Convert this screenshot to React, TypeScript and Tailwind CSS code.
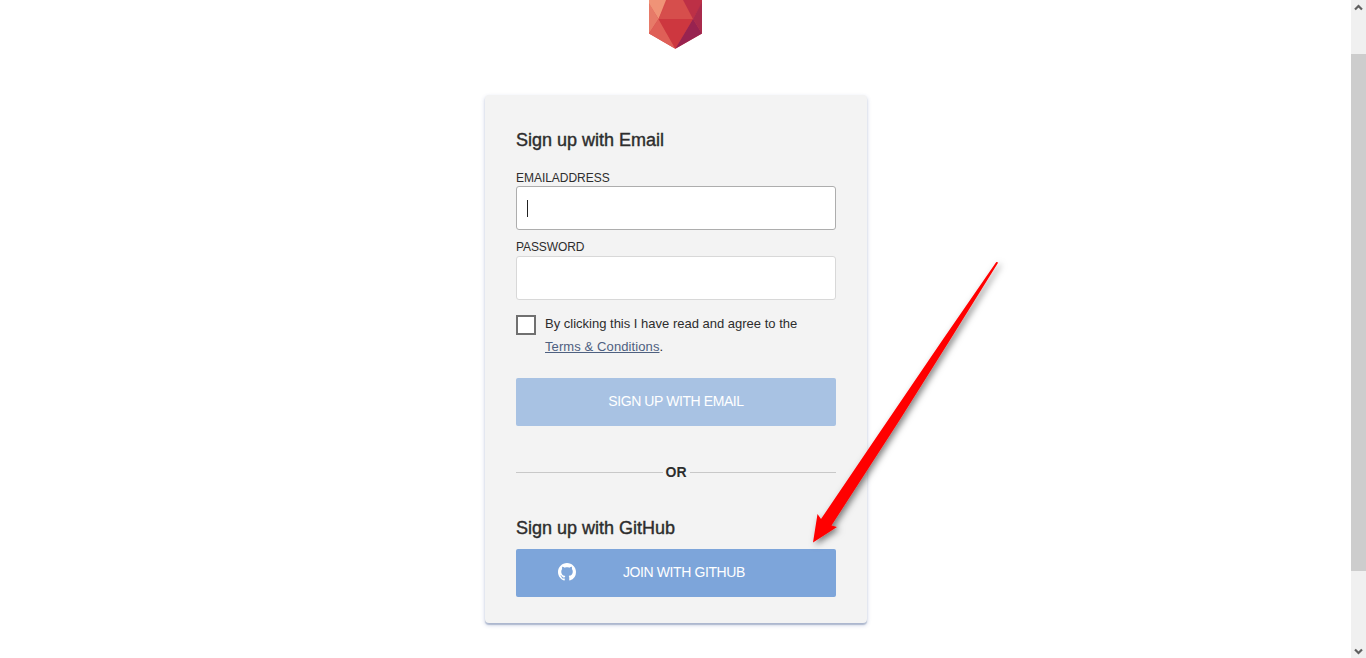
import React from "react";

function Logo() {
  return (
    <svg className="block h-[49px] w-[54px] shrink-0" viewBox="1 0 54 49">
      <path d="M1-10 27-14 54-10V33.5L27.3 48.7 1 33.5Z" fill="#d64b4a" />
      <path d="M1-10H22L10.5 19 1 4Z" fill="#f09377" />
      <path d="M1 3 10.5 19 1 33.5Z" fill="#e77a68" />
      <path d="M10.5 19 27.3 48.7 1 33.5Z" fill="#df5f57" />
      <path d="M21-2 10.5 19H45L34-2Z" fill="#d64e4c" />
      <path d="M10.5 19H45L27.3 48.7Z" fill="#cd373f" />
      <path d="M33.5-3H54V3L45 19Z" fill="#bd3046" />
      <path d="M54 2V33.5L45 19Z" fill="#a92b4c" />
      <path d="M45 19 54 33.5 27.3 48.7Z" fill="#982350" />
    </svg>
  );
}

function GitHubMark() {
  return (
    <svg className="mb-[2px] block size-[18px] shrink-0" viewBox="0 0 16 16" fill="#fff">
      <path d="M8 0C3.58 0 0 3.58 0 8c0 3.54 2.29 6.53 5.47 7.59.4.07.55-.17.55-.38 0-.19-.01-.82-.01-1.49-2.01.37-2.53-.49-2.69-.94-.09-.23-.48-.94-.82-1.13-.28-.15-.68-.52-.01-.53.63-.01 1.08.58 1.23.82.72 1.21 1.87.87 2.33.66.07-.52.28-.87.51-1.07-1.78-.2-3.64-.89-3.64-3.95 0-.87.31-1.59.82-2.15-.08-.2-.36-1.02.08-2.12 0 0 .67-.21 2.2.82.64-.18 1.32-.27 2-.27s1.36.09 2 .27c1.53-1.04 2.2-.82 2.2-.82.44 1.1.16 1.92.08 2.12.51.56.82 1.27.82 2.15 0 3.07-1.87 3.75-3.65 3.95.29.25.54.73.54 1.48 0 1.07-.01 1.93-.01 2.2 0 .21.15.46.55.38A8 8 0 0 0 16 8c0-4.42-3.58-8-8-8Z" />
    </svg>
  );
}

function Arrow() {
  return (
    <svg className="pointer-events-none absolute top-[250px] left-[800px] h-[310px] w-[215px]" viewBox="800 250 215 310">
      <defs>
        <filter id="arrow-shadow" x="-20%" y="-20%" width="140%" height="140%">
          <feDropShadow dx="2.5" dy="2.5" stdDeviation="3" floodColor="#000" floodOpacity="0.5" />
        </filter>
      </defs>
      <path d="M996.3 262 998.2 262.5 950 340 899.7 420 831.5 525.5 837 527 813 542.5 817.5 514 821 519 874.5 440 942.5 340Z" fill="#f00" filter="url(#arrow-shadow)" />
    </svg>
  );
}

function Scrollbar() {
  return (
    <div className="flex h-full w-[15px] shrink-0 flex-col bg-[#f0f0f0]">
      <div className="flex h-[54px] justify-center pt-[4px]">
        <svg className="h-[7px] w-[9px]" viewBox="0 0 9 7"><path d="M1 5.5 4.5 2 8 5.5" fill="none" stroke="#606060" strokeWidth="2.2" /></svg>
      </div>
      <div className="h-[517px] bg-[#cdcdcd]" />
      <div className="flex grow items-end justify-center pb-[3px]">
        <svg className="h-[7px] w-[9px]" viewBox="0 0 9 7"><path d="M1 1.5 4.5 5 8 1.5" fill="none" stroke="#606060" strokeWidth="2.2" /></svg>
      </div>
    </div>
  );
}

export default function App() {
  return (
    <div className="relative flex h-[658px] w-[1366px] overflow-hidden bg-white font-['Liberation_Sans',Arial,sans-serif] text-[#2d2d2d]">
      <main className="flex grow flex-col items-center pl-px">
        <div className="flex w-[54px]">
          <Logo />
        </div>
        <form className="mt-[46px] flex h-[528px] w-[382px] flex-col rounded-[4px] bg-[#f3f3f3] px-[31px] shadow-[0_2px_4px_rgba(70,90,160,0.3),0_2px_1px_rgba(80,105,140,0.3)]">
          <h2 className="mt-[34px] h-[22px] text-[18px] leading-[22px] whitespace-nowrap [-webkit-text-stroke:0.4px_#2d2d2d]">Sign up with Email</h2>
          <label className="mt-[19px] h-[16px] text-[12px] leading-[16px] [word-spacing:-2.5px]">EMAIL ADDRESS</label>
          <div className="flex h-[44px] items-center rounded-[3px] border border-[#adadad] bg-white pl-[10px]">
            <span className="h-[17px] w-px bg-[#222]" />
          </div>
          <label className="mt-[8px] h-[18px] text-[12px] leading-[18px] tracking-[-0.1px]">PASSWORD</label>
          <div className="h-[44px] rounded-[3px] border border-[#d8d8d8] bg-white" />
          <div className="mt-[12px] flex h-[46px]">
            <span className="mt-[3px] size-[20px] shrink-0 border-2 border-[#707070] bg-white" />
            <p className="ml-[9px] text-[13px] leading-[23px] whitespace-nowrap">
              By clicking this I have read and agree to the
              <br />
              <span className="tracking-[0.1px]"><a className="text-[#4e6080] underline">Terms &amp; Conditions</a>.</span>
            </p>
          </div>
          <button type="button" className="mt-[20px] h-[48px] shrink-0 rounded-[2px] bg-[#a8c2e3] pb-[2px] text-[14px] leading-[46px] tracking-[-0.42px] text-white">
            SIGN UP WITH EMAIL
          </button>
          <div className="mt-[36px] flex h-[20px] items-center">
            <span className="h-px grow bg-[#c8c8c8]" />
            <span className="w-[27px] text-center text-[14px] leading-[20px] font-bold">OR</span>
            <span className="h-px grow bg-[#c8c8c8]" />
          </div>
          <h2 className="mt-[35px] h-[22px] text-[18px] leading-[22px] whitespace-nowrap [-webkit-text-stroke:0.4px_#2d2d2d]">Sign up with GitHub</h2>
          <button type="button" className="mt-[10px] flex h-[48px] shrink-0 items-center rounded-[2px] bg-[#7da5da] pl-[42px] text-[14px] tracking-[-0.4px] text-white">
            <GitHubMark />
            <span className="ml-[47px] pb-[2px]">JOIN WITH GITHUB</span>
          </button>
        </form>
      </main>
      <Scrollbar />
      <Arrow />
    </div>
  );
}
